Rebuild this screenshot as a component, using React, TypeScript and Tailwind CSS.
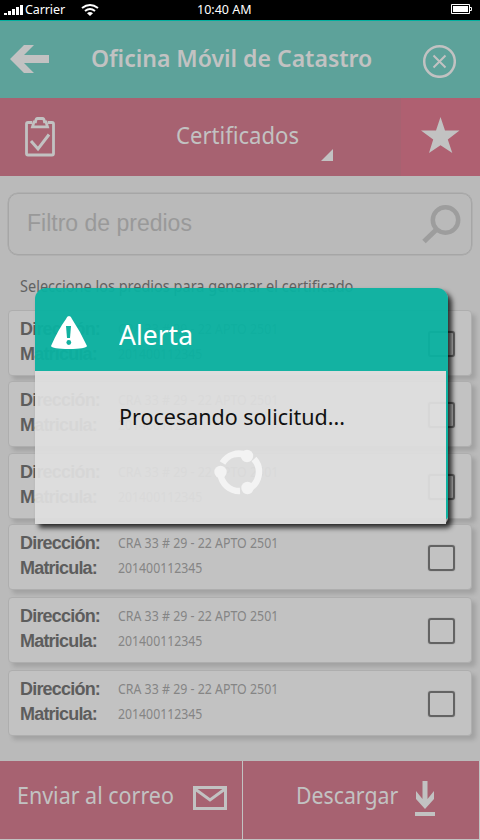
import React from 'react';

const cards = ['mb-[5px]', 'mb-[6px]', 'mb-[5px]', 'mb-[7px]', 'mb-[7px]', ''];

function PropertyCard({ gap }: { gap: string }) {
  return (
    <li
      className={`flex h-[66px] shrink-0 rounded-[4px] border border-[#aeaeae] bg-[#c2c2c2] pl-[11px] shadow-[4px_4px_4px_rgba(0,0,0,0.13)] ${gap}`}
    >
      <div className="w-[98px] pt-[6px] font-['Liberation_Sans',sans-serif] text-[18px] leading-[25px] font-bold tracking-[-0.8px] text-[#5d5d5d]">
        <p>Dirección:</p>
        <p>Matricula:</p>
      </div>
      <div className="w-[310px] pt-[6px] text-[13.5px] leading-[25px] whitespace-nowrap text-[#858585]">
        <p className="origin-left scale-x-[0.916]">CRA 33 # 29 - 22 APTO 2501</p>
        <p className="origin-left scale-x-[0.91]">201400112345</p>
      </div>
      <span className="mt-[20px] h-[26px] w-[27px] rounded-[3px] border-[2.5px] border-[#636363] shadow-[0_0_1px_#636363]" />
    </li>
  );
}

export default function App() {
  return (
    <div className="relative flex h-[840px] w-[480px] flex-col overflow-hidden bg-[#bababa] font-['Noto_Sans',sans-serif]">
      <div className="flex h-[20px] shrink-0 items-center bg-black pl-[4px] text-[12.5px] leading-[20px] text-white">
        <svg width="20" height="20" fill="white">
          <path d="M0 13h3v2H0zM4 11h3v4H4zM8 9h3v6H8zM12 7h3v8h-3zM16 5h3v10h-3z" />
        </svg>
        <span className="w-[56px] pl-[1px] tracking-[-0.1px]">Carrier</span>
        <svg width="20" height="20" viewBox="0 0 20 20" fill="none" stroke="white" strokeWidth="2">
          <path d="M2 8q8-6 16 0M5 11q5-4 10 0" />
          <path d="M7 13.300q3-2.400 6 0L10 16z" fill="white" stroke="none" />
        </svg>
        <span className="ml-[97px] w-[253px]">10:40 AM</span>
        <svg width="24" height="20" fill="none" stroke="white">
          <path d="M1.500 4.500h18v9h-18z" />
          <path d="M3 6h15v6H3z" fill="white" stroke="none" />
          <path d="M20 7.500h1.500v3H20" />
        </svg>
      </div>
      <header className="flex h-[78px] shrink-0 border-t border-[#00b1a0] bg-[#5da29a] pl-[10px]">
        <svg className="mt-[23px]" width="40" height="30" fill="#c2c2c2">
          <path d="M0 15 14 1h10L14 11h25v8H14l10 10H14z" />
        </svg>
        <h1 className="ml-[41px] w-[331px] pt-[16px] text-[24px] leading-[42px] font-semibold whitespace-nowrap text-[#c2c2c2]">
          <span className="inline-block origin-left scale-x-[0.959]">Oficina Móvil de Catastro</span>
        </h1>
        <svg className="mt-[23px]" width="34" height="34" fill="none" stroke="#c2c2c2">
          <circle cx="17.500" cy="17.500" r="15.300" strokeWidth="2.500" />
          <path d="m11.500 11.500 12 12m0-12-12 12" strokeWidth="2" />
        </svg>
      </header>
      <nav className="flex h-[78px] shrink-0 bg-[#a76271] text-[#c2c2c2]">
        <svg className="mt-[18px] ml-[24px]" width="32" height="42" fill="none" stroke="#c2c2c2" strokeWidth="2.800">
          <path d="M8 6.500H4q-1.500 0-1.500 1.500v29.500q0 1.500 1.500 1.500h24q1.500 0 1.500-1.500V8q0-1.500-1.500-1.500h-4" />
          <path d="M8.500 10.800h15L22 5.800h-1.500q-.5-3.300-2-3.300h-5q-1.500 0-2 3.300H10z" />
          <path d="m7 25 7 8 11-14.500" strokeWidth="3" />
        </svg>
        <span className="ml-[120px] w-[144px] pt-[16px] text-[23px] leading-[42px]">
          <span className="inline-block origin-left scale-x-[0.96]">Certificados</span>
        </span>
        <svg className="mt-[51px]" width="14" height="14" fill="#c2c2c2">
          <path d="M1 12 13 0v12z" />
        </svg>
        <div className="ml-auto flex h-full w-[79px] bg-[#af6071]">
          <svg className="mt-[19px] ml-[19px]" width="42" height="40" fill="#c2c2c2">
            <path d="m20.500 0 4.500 13.400h14.500L27.800 22.500l4.500 13.600L20.500 28.200 9 36.100l4.200-13.600L1 13.400h15z" />
          </svg>
        </div>
      </nav>
      <main className="flex h-[585px] shrink-0 flex-col px-[8px] pt-[17px]">
        <div className="flex h-[62px] shrink-0 rounded-[10px] border-[1.5px] border-[#a6a6a6] pl-[18px] shadow-[0_0_0_0.5px_#a6a6a6]">
          <span className="w-[394px] pt-[9px] font-['Liberation_Sans',sans-serif] text-[23px] leading-[40px] text-[#999]">
            Filtro de predios
          </span>
          <svg className="mt-[11px]" width="42" height="40" fill="none" stroke="#9d9d9d">
            <circle cx="24.500" cy="15" r="12.700" strokeWidth="4.500" />
            <path d="M15.500 24.500 3 36.500" strokeWidth="5" />
          </svg>
        </div>
        <p className="h-[55px] shrink-0 pt-[20px] pl-[12px] text-[17px] leading-[22px] whitespace-nowrap text-[#626262]">
          <span className="inline-block origin-left scale-x-[0.853]">Seleccione los predios para generar el certificado</span>
        </p>
        <ul className="flex flex-col">
          {cards.map((gap, i) => (
            <PropertyCard key={i} gap={gap} />
          ))}
        </ul>
      </main>
      <footer className="flex h-[79px] shrink-0 border-r border-b border-[#c2c2c2] bg-[#a76271] text-[23px] leading-[40px] text-[#c2c2c2]">
        <div className="flex w-[243px] border-r border-[#c2c2c2] pl-[17px]">
          <span className="w-[176px] pt-[14px] whitespace-nowrap">
            <span className="inline-block origin-left scale-x-[0.933]">Enviar al correo</span>
          </span>
          <svg className="mt-[25px]" width="34" height="24" fill="none" stroke="#c2c2c2" strokeWidth="3">
            <path d="M1.500 1.500h31v21h-31z" />
            <path d="m2 3 15 11L32 3" />
          </svg>
        </div>
        <div className="flex pl-[53px]">
          <span className="w-[119px] pt-[14px]">
            <span className="inline-block origin-left scale-x-[0.925]">Descargar</span>
          </span>
          <svg className="mt-[20px]" width="20" height="36" fill="#c2c2c2">
            <path d="M7.500 0h5v18l6.500-8v8l-9 10-9-10v-8l6.500 8zM0 31h20v4H0z" />
          </svg>
        </div>
      </footer>

      <div
        role="alertdialog"
        className="absolute top-[288px] left-[35px] flex h-[236px] w-[413px] flex-col rounded-t-[11px] rounded-br-[6px] shadow-[4px_4px_5px_rgba(0,0,0,0.75)]"
      >
        <div className="flex h-[83px] shrink-0 rounded-t-[11px] bg-[#0ab1a0]/95 pl-[16px]">
          <svg className="mt-[27px]" width="37" height="35">
            <path d="M18 1q2 0 3 3 8 12 15 27-1 3-18 3T0 31Q7 15 15 4q1-3 3-3z" fill="white" />
            <path d="M15 11h5l-1 12h-3z" fill="#12b1a0" />
            <circle cx="17.800" cy="27.500" r="2.400" fill="#12b1a0" />
          </svg>
          <h2 className="ml-[31px] pt-[26px] text-[27px] leading-[42px] text-white">
            <span className="inline-block origin-left scale-x-[0.98]">Alerta</span>
          </h2>
        </div>
        <div className="flex h-[153px]">
          <div className="flex w-[411px] flex-col bg-[#dedede]/94 pl-[84px]">
            <p className="pt-[26px] text-[22.5px] leading-[40px] whitespace-nowrap text-[#111]">
              <span className="inline-block origin-left scale-x-[0.955]">Procesando solicitud...</span>
            </p>
            <svg className="mt-[11px] ml-[95px]" width="50" height="48" fill="none" stroke="#f3f3f3">
              <g strokeWidth="6.500">
                <path d="M8.500 15A19 19 0 0 1 33 7.500" />
                <path d="M40 11A19 19 0 0 1 34 41" />
                <path d="M26 43A19 19 0 0 1 6.500 26" />
              </g>
              <g fill="#f3f3f3" stroke="none">
                <circle cx="6.500" cy="24" r="6.200" />
                <circle cx="33" cy="8" r="6.200" />
                <circle cx="33.500" cy="40" r="6.200" />
              </g>
            </svg>
          </div>
          <div className="h-[148px] w-[2px] rounded-br-[2px] bg-[#0eb1a0]" />
        </div>
      </div>
    </div>
  );
}
